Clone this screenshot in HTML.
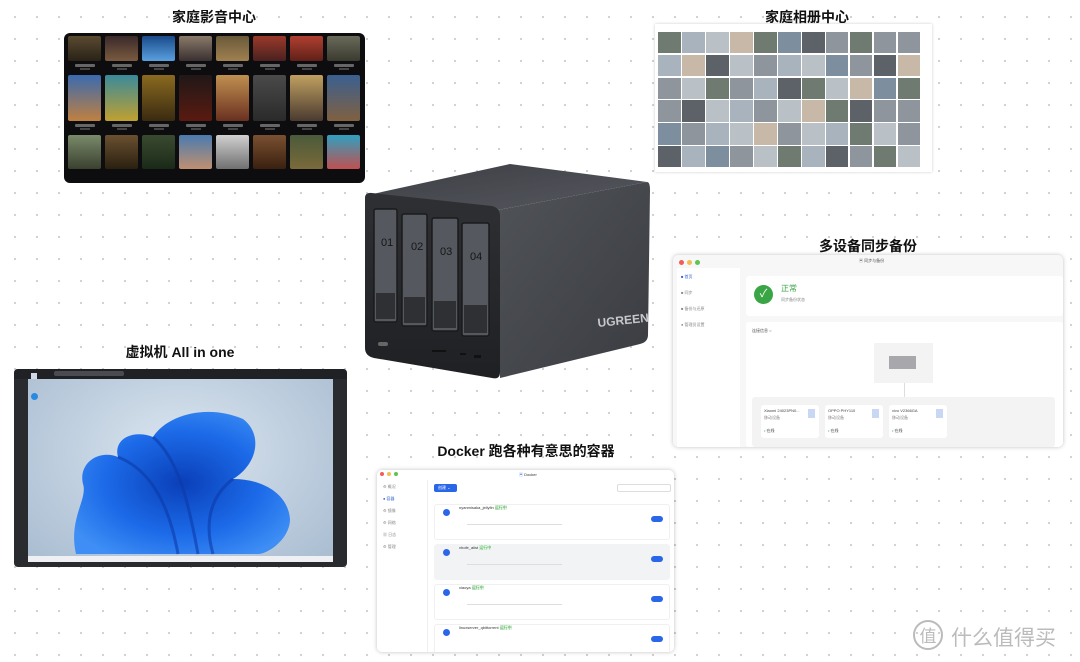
<!DOCTYPE html>
<html><head><meta charset="utf-8"><style>
*{margin:0;padding:0;box-sizing:border-box}
body{width:1080px;height:662px;overflow:hidden;position:relative;background:#fff;
background-image:radial-gradient(circle,#cfcfcf 1px,transparent 1.3px);background-size:22px 22px;background-position:4px 6px;
font-family:"Liberation Sans","Noto Sans CJK SC",sans-serif}
.t{position:absolute;font-weight:bold;font-size:14px;color:#111;white-space:nowrap;transform:translateX(-50%)}
.abs{position:absolute}
#media{left:64px;top:33px;width:301px;height:150px;background:#0d0d0f;border-radius:6px;overflow:hidden;padding:3px 4px}
#media .row{display:flex;gap:4px;margin-bottom:4px}
#media .p{width:33px;flex:none}
#media .p i{display:block;width:33px;border-radius:2px}
#media .p b{display:block;height:3px;width:20px;margin:3px auto 1px;background:#666;border-radius:1px}
#media .p s{display:block;height:2px;width:10px;margin:0 auto;background:#444}
#photo{left:655px;top:24px;width:277px;height:148px;background:#fff;box-shadow:0 0 3px rgba(0,0,0,.2);padding:8px 4px 2px 3px;overflow:hidden}
#photo .g{display:grid;grid-template-columns:repeat(11,22.6px);grid-auto-rows:21.4px;gap:1.4px}
#photo .g i{display:block;background:#8e959c}
#photo .g i:nth-child(3n){background:#b9c0c6}
#photo .g i:nth-child(4n+1){background:#6f7a70}
#photo .g i:nth-child(5n+2){background:#a8b3be}
#photo .g i:nth-child(7n){background:#5d6168}
#photo .g i:nth-child(9n+4){background:#c8b8a8}
#photo .g i:nth-child(13n+6){background:#7d8f9e}
.win{position:absolute;background:#fff;border-radius:5px;box-shadow:0 0 4px rgba(0,0,0,.25);overflow:hidden}
.dots{position:absolute;left:6px;top:5px;display:flex;gap:3px}
.dots i{width:5px;height:5px;border-radius:50%;display:block}
.sm{font-size:4px;color:#888;position:absolute;white-space:nowrap}
.card{position:absolute;background:#fff;border-radius:3px}
</style></head><body>

<div class="t" style="left:214px;top:7px">家庭影音中心</div>
<div class="t" style="left:807px;top:7px">家庭相册中心</div>
<div class="t" style="left:868px;top:236px">多设备同步备份</div>
<div class="t" style="left:180px;top:342px">虚拟机 All in one</div>
<div class="t" style="left:526px;top:441px">Docker 跑各种有意思的容器</div>

<div id="media" class="abs">
 <div class="row">
  <div class="p"><i style="height:25px;background:linear-gradient(#5a4a30,#2a2218)"></i><b></b><s></s></div>
  <div class="p"><i style="height:25px;background:linear-gradient(#3a2a2a,#7a5a40)"></i><b></b><s></s></div>
  <div class="p"><i style="height:25px;background:linear-gradient(#1a4a8a,#5aa0e0)"></i><b></b><s></s></div>
  <div class="p"><i style="height:25px;background:linear-gradient(#8a7a6a,#3a3030)"></i><b></b><s></s></div>
  <div class="p"><i style="height:25px;background:linear-gradient(#6a5a3a,#a08050)"></i><b></b><s></s></div>
  <div class="p"><i style="height:25px;background:linear-gradient(#9a3a2a,#4a2020)"></i><b></b><s></s></div>
  <div class="p"><i style="height:25px;background:linear-gradient(#b04030,#602018)"></i><b></b><s></s></div>
  <div class="p"><i style="height:25px;background:linear-gradient(#6a6a5a,#3a3a30)"></i><b></b><s></s></div>
 </div>
 <div class="row" style="margin-top:5px">
  <div class="p"><i style="height:46px;background:linear-gradient(#3a6ab0,#c08040)"></i><b></b><s></s></div>
  <div class="p"><i style="height:46px;background:linear-gradient(#3a8a9a,#c0a030)"></i><b></b><s></s></div>
  <div class="p"><i style="height:46px;background:linear-gradient(#8a6a20,#3a2a10)"></i><b></b><s></s></div>
  <div class="p"><i style="height:46px;background:linear-gradient(#201818,#5a1a10)"></i><b></b><s></s></div>
  <div class="p"><i style="height:46px;background:linear-gradient(#c09050,#6a3020)"></i><b></b><s></s></div>
  <div class="p"><i style="height:46px;background:linear-gradient(#4a4a4a,#2a2a2a)"></i><b></b><s></s></div>
  <div class="p"><i style="height:46px;background:linear-gradient(#c0a060,#4a3a30)"></i><b></b><s></s></div>
  <div class="p"><i style="height:46px;background:linear-gradient(#3a6090,#806040)"></i><b></b><s></s></div>
 </div>
 <div class="row" style="margin-top:5px">
  <div class="p"><i style="height:34px;background:linear-gradient(#7a8a6a,#3a4030)"></i></div>
  <div class="p"><i style="height:34px;background:linear-gradient(#6a5030,#2a2010)"></i></div>
  <div class="p"><i style="height:34px;background:linear-gradient(#3a4a30,#1a2a18)"></i></div>
  <div class="p"><i style="height:34px;background:linear-gradient(#4a7ab0,#c09070)"></i></div>
  <div class="p"><i style="height:34px;background:linear-gradient(#d0d0d0,#707070)"></i></div>
  <div class="p"><i style="height:34px;background:linear-gradient(#7a5030,#3a2010)"></i></div>
  <div class="p"><i style="height:34px;background:linear-gradient(#4a5a3a,#7a6a3a)"></i></div>
  <div class="p"><i style="height:34px;background:linear-gradient(#30a0c0,#c05050)"></i></div>
 </div>
</div>

<div id="photo" class="abs">
 <div class="g">
 <i></i><i></i><i></i><i></i><i></i><i></i><i></i><i></i><i></i><i></i><i></i>
 <i></i><i></i><i></i><i></i><i></i><i></i><i></i><i></i><i></i><i></i><i></i>
 <i></i><i></i><i></i><i></i><i></i><i></i><i></i><i></i><i></i><i></i><i></i>
 <i></i><i></i><i></i><i></i><i></i><i></i><i></i><i></i><i></i><i></i><i></i>
 <i></i><i></i><i></i><i></i><i></i><i></i><i></i><i></i><i></i><i></i><i></i>
 <i></i><i></i><i></i><i></i><i></i><i></i><i></i><i></i><i></i><i></i><i></i>
 </div>
</div>

<!-- NAS -->
<svg class="abs" style="left:360px;top:160px" width="300" height="230" viewBox="0 0 300 230">
 <defs>
  <linearGradient id="top" x1="0" y1="0" x2="1" y2="1"><stop offset="0" stop-color="#3c3e44"/><stop offset="1" stop-color="#55585e"/></linearGradient>
  <linearGradient id="side" x1="0" y1="0" x2="1" y2="1"><stop offset="0" stop-color="#505358"/><stop offset="1" stop-color="#3a3c41"/></linearGradient>
  <linearGradient id="front" x1="0" y1="0" x2="0" y2="1"><stop offset="0" stop-color="#2e3034"/><stop offset="1" stop-color="#1f2023"/></linearGradient>
 </defs>
 <path d="M8 35 L150 4 L287 22 L138 50 Z" fill="url(#top)"/>
 <path d="M138 50 L287 22 Q290 22 290 30 L288 175 Q288 182 280 184 L140 218 Z" fill="url(#side)"/>
 <path d="M5 38 Q5 32 12 33 L132 46 Q140 48 140 56 L140 212 Q140 220 132 218 L14 198 Q5 196 5 188 Z" fill="url(#front)"/>
 <g fill="#55585e" stroke="#1a1a1c" stroke-width="1.5">
  <rect x="14" y="49" width="23" height="113" rx="2"/>
  <rect x="42" y="54" width="25" height="112" rx="2"/>
  <rect x="72" y="58" width="26" height="113" rx="2"/>
  <rect x="102" y="63" width="27" height="113" rx="2"/>
 </g>
 <g fill="#2e3034"><rect x="16" y="133" width="19" height="26"/><rect x="44" y="137" width="21" height="26"/><rect x="74" y="141" width="22" height="27"/><rect x="104" y="145" width="23" height="28"/></g>
 <g fill="#151618" font-family="Liberation Sans" font-size="11"><text x="21" y="86">01</text><text x="51" y="90">02</text><text x="80" y="95">03</text><text x="110" y="100">04</text></g>
 <text x="238" y="167" fill="#c8c8cc" font-family="Liberation Sans" font-weight="bold" font-size="12" transform="rotate(-6 238 167)">UGREEN</text>
 <rect x="18" y="182" width="10" height="4" rx="2" fill="#666"/>
 <rect x="72" y="190" width="14" height="2" fill="#111"/><rect x="100" y="193" width="6" height="2" fill="#111"/><rect x="114" y="195" width="7" height="3" fill="#111"/>
</svg>

<!-- Sync window -->
<div class="win" style="left:673px;top:255px;width:390px;height:192px;background:#f7f7f8">
 <div class="dots"><i style="background:#ee5f57"></i><i style="background:#f4bd4f"></i><i style="background:#5fc453"></i></div>
 <div class="sm" style="left:186px;top:3px;color:#555">▣ 同步与备份</div>
 <div class="abs" style="left:4px;top:13px;width:63px;height:179px;background:#fff"></div>
 <div class="sm" style="left:8px;top:19px;color:#3060d0">■ 首页</div>
 <div class="sm" style="left:8px;top:35px">■ 同步</div>
 <div class="sm" style="left:8px;top:51px">■ 备份与还原</div>
 <div class="sm" style="left:8px;top:67px">● 管理员设置</div>
 <div class="card" style="left:73px;top:21px;width:317px;height:40px"></div>
 <div class="abs" style="left:81px;top:30px;width:19px;height:19px;border-radius:50%;background:#3aa545;color:#fff;font-size:11px;text-align:center;line-height:19px">✓</div>
 <div class="abs" style="left:108px;top:28px;font-size:8px;color:#3aa545">正常</div>
 <div class="sm" style="left:108px;top:42px">同步备份状态</div>
 <div class="card" style="left:73px;top:67px;width:317px;height:125px"></div>
 <div class="sm" style="left:79px;top:73px;color:#555">连接信息 ○</div>
 <div class="abs" style="left:201px;top:88px;width:59px;height:40px;background:#f3f3f4"></div>
 <div class="abs" style="left:216px;top:101px;width:27px;height:13px;background:#a8a8ac"></div>
 <div class="abs" style="left:231px;top:128px;width:1px;height:14px;background:#ddd"></div>
 <div class="abs" style="left:79px;top:142px;width:303px;height:50px;background:#f3f3f4;border-radius:3px"></div>
 <div class="card" style="left:88px;top:150px;width:58px;height:33px"><div class="sm" style="left:3px;top:3px;color:#444">Xiaomi 24023PN0...</div><div class="sm" style="left:3px;top:10px">移动设备</div><div class="sm" style="left:3px;top:23px;color:#444"><span style="color:#3aa545">•</span> 在线</div><div class="abs" style="left:47px;top:4px;width:7px;height:9px;background:#c8d8f4"></div></div>
 <div class="card" style="left:152px;top:150px;width:58px;height:33px"><div class="sm" style="left:3px;top:3px;color:#444">OPPO PHY110</div><div class="sm" style="left:3px;top:10px">移动设备</div><div class="sm" style="left:3px;top:23px;color:#444"><span style="color:#3aa545">•</span> 在线</div><div class="abs" style="left:47px;top:4px;width:7px;height:9px;background:#c8d8f4"></div></div>
 <div class="card" style="left:216px;top:150px;width:58px;height:33px"><div class="sm" style="left:3px;top:3px;color:#444">vivo V2366GA</div><div class="sm" style="left:3px;top:10px">移动设备</div><div class="sm" style="left:3px;top:23px;color:#444"><span style="color:#3aa545">•</span> 在线</div><div class="abs" style="left:47px;top:4px;width:7px;height:9px;background:#c8d8f4"></div></div>
</div>

<!-- VM -->
<div class="abs" style="left:14px;top:369px;width:333px;height:198px;background:#2a2b2e;border-radius:4px;overflow:hidden">
 <div class="abs" style="left:0;top:0;width:333px;height:10px;background:#202124"></div>
 <div class="abs" style="left:40px;top:2px;width:70px;height:5px;background:#4a4b50;border-radius:2px"></div>
 <div class="abs" style="left:14px;top:10px;width:305px;height:183px;background:radial-gradient(ellipse at 50% 40%,#dbe6f0,#b7c8da 70%,#a9bcd0)"></div>
 <svg class="abs" style="left:14px;top:10px" width="305" height="183" viewBox="0 0 305 183">
  <defs><radialGradient id="bl" cx="0.5" cy="0.5" r="0.6"><stop offset="0" stop-color="#0a3fb8"/><stop offset="0.6" stop-color="#1c6ae8"/><stop offset="1" stop-color="#3e8ef5"/></radialGradient></defs>
  <path d="M48 175 C40 140 60 120 55 105 C50 85 70 70 90 78 C85 60 105 50 125 58 C140 35 180 25 215 40 C235 55 230 85 205 100 C235 100 260 115 262 140 C262 160 240 175 230 175 Z" fill="url(#bl)"/>
  <path d="M90 78 C120 90 140 120 150 175 M125 58 C150 80 160 120 170 175 M205 100 C185 115 175 140 185 175" stroke="#0b3aa8" stroke-width="3" fill="none" opacity=".6"/>
 </svg>
 <div class="abs" style="left:14px;top:187px;width:305px;height:6px;background:#eef0f3"></div>
 <div class="abs" style="left:17px;top:4px;width:6px;height:6px;background:#cfd8e4"></div>
 <div class="abs" style="left:17px;top:24px;width:7px;height:7px;border-radius:50%;background:#2a8adf"></div>
</div>

<!-- Docker -->
<div class="win" style="left:377px;top:470px;width:297px;height:182px">
 <div class="dots" style="left:3px;top:2px"><i style="background:#ee5f57;width:4px;height:4px"></i><i style="background:#f4bd4f;width:4px;height:4px"></i><i style="background:#5fc453;width:4px;height:4px"></i></div>
 <div class="sm" style="left:142px;top:2px;color:#333"><span style="color:#3070e0">▣</span> Docker</div>
 <div class="abs" style="left:50px;top:10px;width:1px;height:172px;background:#eee"></div>
 <div class="sm" style="left:6px;top:14px">⚙ 概况</div>
 <div class="sm" style="left:6px;top:26px;color:#3060d0">● 容器</div>
 <div class="sm" style="left:6px;top:38px">⚙ 镜像</div>
 <div class="sm" style="left:6px;top:50px">⚙ 网络</div>
 <div class="sm" style="left:6px;top:62px">▦ 日志</div>
 <div class="sm" style="left:6px;top:74px">⚙ 管理</div>
 <div class="abs" style="left:57px;top:14px;width:23px;height:8px;background:#2a66e8;border-radius:2px;color:#fff;font-size:4px;line-height:8px;padding-left:4px">创建 ⌄</div>
 <div class="abs" style="left:240px;top:14px;width:54px;height:8px;border:1px solid #ddd;border-radius:2px"></div>
 <div class="card" style="left:57px;top:34px;width:236px;height:36px;border:1px solid #f0f0f0"></div>
 <div class="card" style="left:57px;top:74px;width:236px;height:36px;background:#f2f3f5"></div>
 <div class="card" style="left:57px;top:114px;width:236px;height:36px;border:1px solid #f0f0f0"></div>
 <div class="card" style="left:57px;top:154px;width:236px;height:30px;border:1px solid #f0f0f0"></div>
 <div class="sm" style="left:82px;top:35px;color:#333">nyanmisaka_jellyfin <span style="color:#3aa545;background:#e6f5e6">运行中</span></div>
 <div class="sm" style="left:82px;top:75px;color:#333">xhofe_alist <span style="color:#3aa545;background:#e6f5e6">运行中</span></div>
 <div class="sm" style="left:82px;top:115px;color:#333">xiaoya <span style="color:#3aa545;background:#e6f5e6">运行中</span></div>
 <div class="sm" style="left:82px;top:155px;color:#333">linuxserver_qbittorrent <span style="color:#3aa545;background:#e6f5e6">运行中</span></div>
 <div class="abs" style="left:66px;top:39px;width:7px;height:7px;border-radius:50%;background:#2a66e8"></div>
 <div class="abs" style="left:66px;top:79px;width:7px;height:7px;border-radius:50%;background:#2a66e8"></div>
 <div class="abs" style="left:66px;top:119px;width:7px;height:7px;border-radius:50%;background:#2a66e8"></div>
 <div class="abs" style="left:66px;top:159px;width:7px;height:7px;border-radius:50%;background:#2a66e8"></div>
 <div class="abs" style="left:274px;top:46px;width:12px;height:6px;border-radius:3px;background:#2a66e8"></div>
 <div class="abs" style="left:274px;top:86px;width:12px;height:6px;border-radius:3px;background:#2a66e8"></div>
 <div class="abs" style="left:274px;top:126px;width:12px;height:6px;border-radius:3px;background:#2a66e8"></div>
 <div class="abs" style="left:274px;top:166px;width:12px;height:6px;border-radius:3px;background:#2a66e8"></div>
 <div class="abs" style="left:90px;top:54px;width:95px;height:1px;background:#ddd"></div>
 <div class="abs" style="left:90px;top:94px;width:95px;height:1px;background:#ddd"></div>
 <div class="abs" style="left:90px;top:134px;width:95px;height:1px;background:#ddd"></div>
</div>

<!-- logo -->
<div class="abs" style="left:913px;top:620px;width:30px;height:30px;border:2px solid #bbb;border-radius:50%;color:#bbb;font-size:17px;text-align:center;line-height:26px;font-family:'Noto Sans CJK SC',sans-serif">值</div>
<div class="abs" style="left:951px;top:622px;font-size:21px;color:#bbb;font-family:'Noto Sans CJK SC',sans-serif;white-space:nowrap">什么值得买</div>
</body></html>
